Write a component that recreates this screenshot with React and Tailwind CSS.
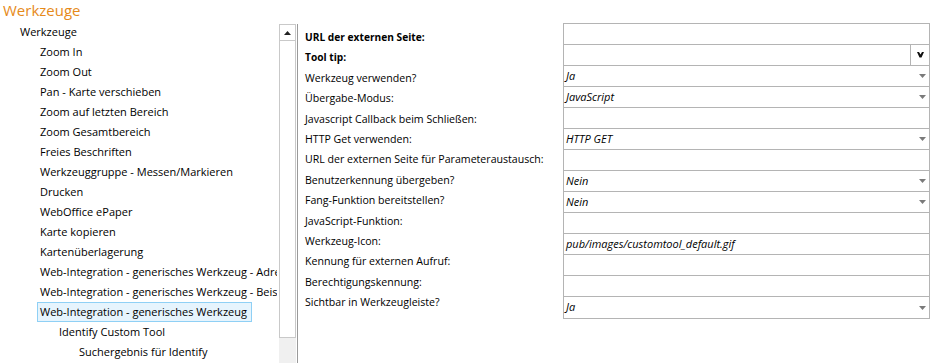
import React from "react";

const tree = [
  { t: "Werkzeuge", l: 0 },
  { t: "Zoom In", l: 1 },
  { t: "Zoom Out", l: 1 },
  { t: "Pan - Karte verschieben", l: 1 },
  { t: "Zoom auf letzten Bereich", l: 1 },
  { t: "Zoom Gesamtbereich", l: 1 },
  { t: "Freies Beschriften", l: 1 },
  { t: "Werkzeuggruppe - Messen/Markieren", l: 1 },
  { t: "Drucken", l: 1 },
  { t: "WebOffice ePaper", l: 1 },
  { t: "Karte kopieren", l: 1 },
  { t: "Kartenüberlagerung", l: 1 },
  { t: "Web-Integration - generisches Werkzeug - Adresssuche", l: 1 },
  { t: "Web-Integration - generisches Werkzeug - Beispiel", l: 1 },
  { t: "Web-Integration - generisches Werkzeug", l: 1, sel: true },
  { t: "Identify Custom Tool", l: 2 },
  { t: "Suchergebnis für Identify", l: 3 },
];

const pad = ["pl-[20px]", "pl-[37px]", "pl-[59px]", "pl-[79px]"];

const rows = [
  { label: "URL der externen Seite:", bold: true, type: "text" },
  { label: "Tool tip:", bold: true, type: "tip" },
  { label: "Werkzeug verwenden?", type: "select", value: "Ja" },
  { label: "Übergabe-Modus:", type: "select", value: "JavaScript" },
  { label: "Javascript Callback beim Schließen:", type: "text" },
  { label: "HTTP Get verwenden:", type: "select", value: "HTTP GET" },
  { label: "URL der externen Seite für Parameteraustausch:", type: "text" },
  { label: "Benutzerkennung übergeben?", type: "select", value: "Nein" },
  { label: "Fang-Funktion bereitstellen?", type: "select", value: "Nein" },
  { label: "JavaScript-Funktion:", type: "text" },
  { label: "Werkzeug-Icon:", type: "text", value: "pub/images/customtool_default.gif" },
  { label: "Kennung für externen Aufruf:", type: "text" },
  { label: "Berechtigungskennung:", type: "text" },
  { label: "Sichtbar in Werkzeugleiste?", type: "select", value: "Ja" },
];

function Caret() {
  return (
    <svg width="7" height="4" viewBox="0 0 7 4" className="shrink-0 mr-[3px]">
      <path d="M0 0 H7 L3.5 4 Z" fill="#7a7a7a" />
    </svg>
  );
}

export default function App() {
  return (
    <div
      className="w-[932px] h-[363px] bg-white overflow-hidden text-black"
      style={{ fontFamily: '"Open Sans", "Noto Sans", sans-serif' }}
    >
      <div className="h-[22px] pl-[3px] text-[15px] leading-[21px] text-[#e68a1a]">
        Werkzeuge
      </div>
      <div className="flex h-[341px]">
        {/* tree */}
        <div className="w-[277px] overflow-hidden text-[11px]">
          {tree.map((it, i) => (
            <div key={i} className={`h-[20px] whitespace-nowrap flex items-center ${pad[it.l]}`}>
              {it.sel ? (
                <span className="h-[20px] flex items-center pl-[2px] pr-[4px] border border-[#8fd0f5] bg-[#e6f4fd]">
                  {it.t}
                </span>
              ) : (
                <span className={it.l === 1 ? "pl-[3px]" : ""}>{it.t}</span>
              )}
            </div>
          ))}
        </div>
        <div className="w-[2px]" />
        {/* scrollbar */}
        <div className="w-[17px] flex flex-col pt-[2px]">
          <div className="h-[314px] border border-[#c9c9c9] bg-white flex flex-col">
            <div className="h-[16px] border-b border-[#c9c9c9] flex items-center justify-center">
              <svg width="7" height="4" viewBox="0 0 7 4">
                <path d="M3.5 0 L7 4 H0 Z" fill="#222" />
              </svg>
            </div>
          </div>
          <div className="flex-1 bg-[#f0f0f0]" />
        </div>
        <div className="w-[1px]" />
        {/* form */}
        <div className="flex-1 border-l border-[#9a9a9a] flex mt-[2px]">
          <div className="w-[265px] pl-[7px] pt-[3px] text-[10.6px] leading-[20.4px]">
            {rows.map((r, i) => (
              <div
                key={i}
                className={`whitespace-nowrap ${r.bold ? "font-bold text-[10.2px]" : ""}`}
              >
                {r.label}
              </div>
            ))}
          </div>
          <div className="w-[367px] -mt-[1px]">
            {rows.map((r, i) => {
              const h = i === 0 || i === rows.length - 1 ? "h-[22px]" : "h-[21px]";
              return (
                <div
                  key={i}
                  className={`${h} border-x border-b ${i === 0 ? "border-t" : ""} border-[#b4b4b4] flex items-center text-[11px] italic`}
                >
                  <div className="flex-1 pl-[2px] whitespace-nowrap">{r.value || ""}</div>
                  {r.type === "select" && <Caret />}
                  {r.type === "tip" && (
                    <div className="w-[19px] h-full border-l border-[#b4b4b4] flex items-center justify-center">
                      <svg width="7" height="6" viewBox="0 0 7 6">
                        <path d="M0 0 H2 L3.5 2.5 L5 0 H7 L4.5 5.5 H2.5 Z" fill="#111" />
                      </svg>
                    </div>
                  )}
                </div>
              );
            })}
          </div>
        </div>
      </div>
    </div>
  );
}
